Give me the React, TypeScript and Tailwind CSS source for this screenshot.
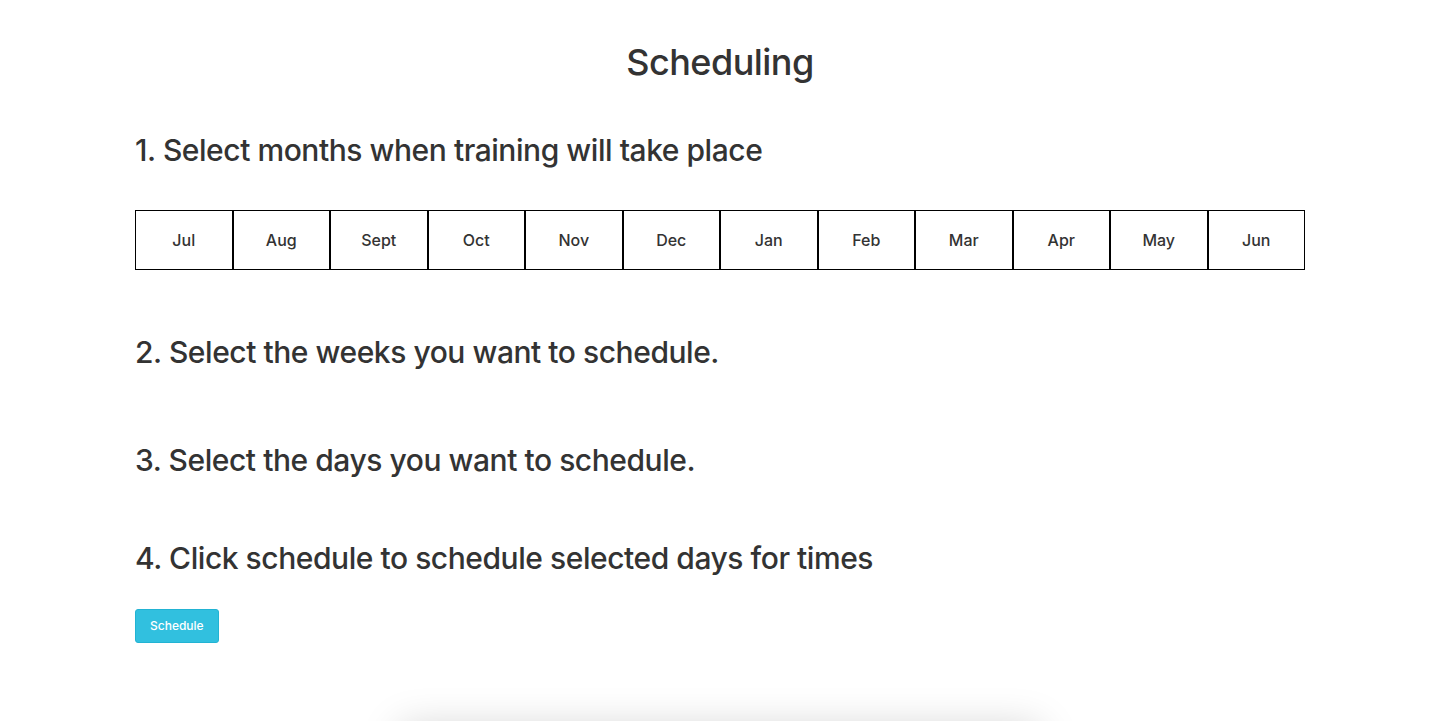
import React, { useState } from 'react';

const MONTHS = ['Jul', 'Aug', 'Sept', 'Oct', 'Nov', 'Dec', 'Jan', 'Feb', 'Mar', 'Apr', 'May', 'Jun'];

const App: React.FC = () => {
  const [selected, setSelected] = useState<string[]>([]);

  const toggle = (m: string) =>
    setSelected((s) => (s.includes(m) ? s.filter((x) => x !== m) : [...s, m]));

  return (
    <div className="min-h-screen bg-white text-[#333] font-['Inter','Liberation_Sans',Arial,sans-serif] overflow-hidden">
      <div className="w-[1170px] mx-auto">
        {/* Title */}
        <h1 className="pt-[42px] text-center text-[36px] leading-[40px] font-medium tracking-[-0.015em]">Scheduling</h1>

        {/* Step 1 */}
        <h2 className="mt-[52px] text-[30px] leading-[33px] font-medium tracking-[-0.015em]">1. Select months when training will take place</h2>
        <div className="mt-[43px] grid grid-cols-12">
          {MONTHS.map((m) => (
            <button
              key={m}
              onClick={() => toggle(m)}
              className={`h-[60px] border border-black text-[16px] font-medium ${
                selected.includes(m) ? 'bg-[#5bc0de] text-white' : 'bg-white text-[#333]'
              }`}
            >
              {m}
            </button>
          ))}
        </div>

        {/* Step 2 */}
        <h2 className="mt-[66px] text-[30px] leading-[33px] font-medium tracking-[-0.015em]">2. Select the weeks you want to schedule.</h2>

        {/* Step 3 */}
        <h2 className="mt-[75px] text-[30px] leading-[33px] font-medium tracking-[-0.015em]">3. Select the days you want to schedule.</h2>

        {/* Step 4 */}
        <h2 className="mt-[65px] text-[30px] leading-[33px] font-medium tracking-[-0.015em]">4. Click schedule to schedule selected days for times</h2>
        <button className="mt-[34px] h-[34px] px-[14px] rounded-[3px] bg-[#31c0df] border border-[#22b3d3] text-white text-[12px] font-medium">
          Schedule
        </button>
      </div>

      {/* Card peeking below the fold */}
      <div className="mx-auto mt-[84px] w-[640px] h-[200px] bg-white rounded-[4px] shadow-[0_0_40px_rgba(0,0,0,0.18)]"></div>
    </div>
  );
};

export default App;
